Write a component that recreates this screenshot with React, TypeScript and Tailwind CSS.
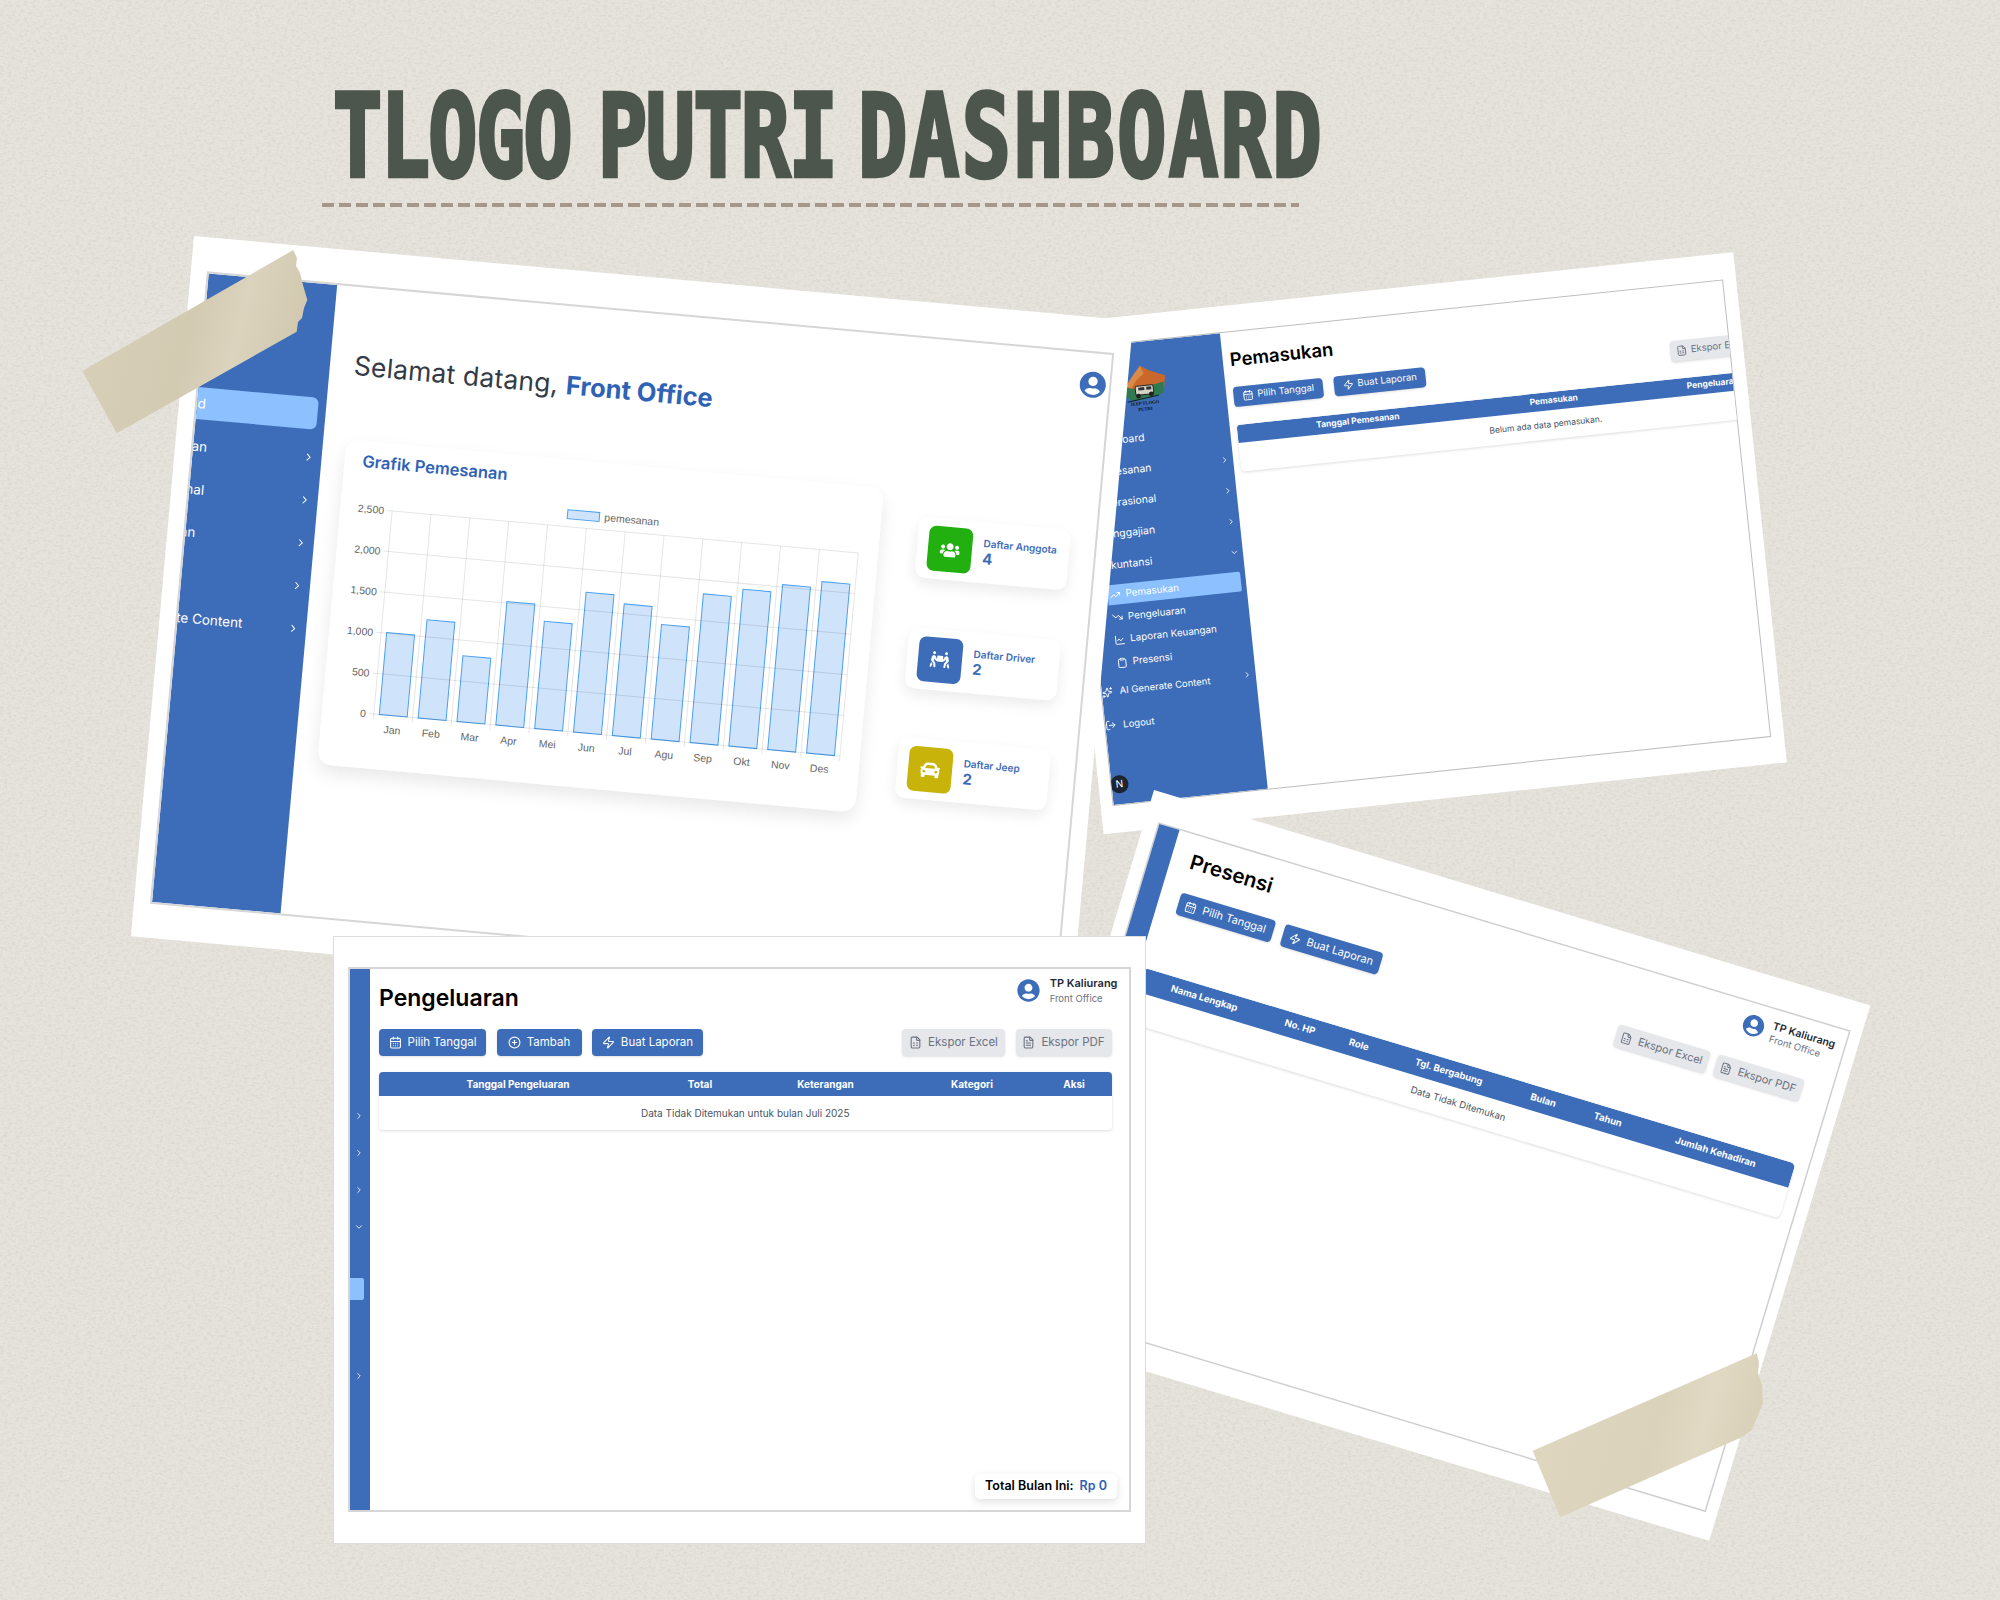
import React from "react";
import {
  CalendarDays, Zap, CirclePlus, FileSpreadsheet, FileText, ChevronRight, ChevronDown,
  TrendingUp, TrendingDown, ChartLine, Clipboard, Sparkles, LogOut, LayoutDashboard,
  CalendarCheck, Truck, Wallet, Calculator,
} from "lucide-react";
import { FaUserCircle, FaUsers, FaPeopleCarry, FaCar } from "react-icons/fa";

const months = ["Jan", "Feb", "Mar", "Apr", "Mei", "Jun", "Jul", "Agu", "Sep", "Okt", "Nov", "Des"];
const values = [1010, 1210, 810, 1520, 1320, 1720, 1620, 1410, 1830, 1930, 2030, 2110];

function Chart() {
  const x0 = 52, x1 = 520, yT = 26, yB = 230;
  const step = (x1 - x0) / 12;
  const y = (v: number) => yB - (v / 2500) * (yB - yT);
  return (
    <svg width="540" height="284" className="block">
      {[0, 500, 1000, 1500, 2000, 2500].map((v) => (
        <g key={v}>
          <text x={x0 - 8} y={y(v) + 4} textAnchor="end" fontSize="10.5" fill="#666" fontFamily="Liberation Sans">
            {v.toLocaleString("en-US")}
          </text>
        </g>
      ))}
      {values.map((v, i) => (
        <rect key={i} x={x0 + i * step + 5.5} y={y(v)} width={step - 11} height={yB - y(v)} fill="#cfe3fb" stroke="#4a9ff0" strokeWidth="1" />
      ))}
      {[0, 500, 1000, 1500, 2000, 2500].map((v) => (
        <line key={v} x1={x0 - 5} x2={x1} y1={y(v)} y2={y(v)} stroke="#000" strokeOpacity="0.1" />
      ))}
      {months.map((m, i) => (
        <line key={m} x1={x0 + i * step} x2={x0 + i * step} y1={yT} y2={yB + 5} stroke="#000" strokeOpacity="0.1" />
      ))}
      <line x1={x1} x2={x1} y1={yT} y2={yB + 5} stroke="#000" strokeOpacity="0.1" />
      {months.map((m, i) => (
        <text key={m} x={x0 + (i + 0.5) * step} y={yB + 18} textAnchor="middle" fontSize="10.5" fill="#666" fontFamily="Liberation Sans">
          {m}
        </text>
      ))}
      <rect x="227" y="9" width="32" height="9" fill="#cfe3fb" stroke="#4a9ff0" />
      <text x="264" y="17" fontSize="10.5" fill="#666" fontFamily="Liberation Sans">pemesanan</text>
    </svg>
  );
}

function Logo() {
  return (
    <svg width="44" height="48" viewBox="0 0 44 48" className="block">
      <polygon points="3,21 10,12 19,2 27,7 36,11 43,14 41,26 3,27" fill="#c9682a" />
      <polygon points="3,21 10,12 19,2 22,10 14,16 8,24" fill="#d98a48" />
      <polygon points="2,32 3,22 12,25 30,22 41,20 40,31 30,34 10,37" fill="#2f7a4e" />
      <rect x="12" y="22" width="18" height="9" rx="1.5" fill="#d4d3c8" stroke="#222" strokeWidth="1" />
      <rect x="15" y="23.5" width="6" height="3" fill="#333" />
      <rect x="23" y="23.5" width="5" height="3" fill="#333" />
      <circle cx="14.5" cy="32" r="2.4" fill="#222" />
      <circle cx="27.5" cy="31" r="2.4" fill="#222" />
      <line x1="3" y1="37" x2="35" y2="33" stroke="#17202b" strokeWidth="1" />
      <text x="20" y="41" textAnchor="middle" fontSize="4.6" fontWeight="700" fill="#111" fontFamily="Liberation Serif">JEEP TLOGO</text>
      <text x="20" y="47" textAnchor="middle" fontSize="4.6" fontWeight="700" fill="#111" fontFamily="Liberation Serif">PUTRI</text>
    </svg>
  );
}

function StatCard({ icon, bg, label, value }: { icon: React.ReactNode; bg: string; label: string; value: string }) {
  return (
    <div className="flex h-[61px] w-[152px] items-center rounded-[10px] bg-white pl-[11px] shadow-[0_6px_14px_rgba(0,0,0,0.08)]">
      <div className={`flex h-[45px] w-[44px] items-center justify-center rounded-[7px] text-white ${bg}`}>{icon}</div>
      <div className="ml-[11px] text-[#3d6cb9]">
        <div className="text-[10px] font-semibold leading-[12px] whitespace-nowrap">{label}</div>
        <div className="mt-[1px] text-[15px] font-bold leading-[18px]">{value}</div>
      </div>
    </div>
  );
}

const sidebar1 = [
  { t: "Pemesanan", w: "w-[14px]" },
  { t: "Operasional", w: "w-[15px]" },
  { t: "Penggajian", w: "w-[10px]" },
  { t: "Akuntansi", w: "w-[0px]" },
  { t: "AI Generate Content", w: "w-[65px]" },
];

function PhotoDashboard() {
  return (
    <div className="absolute left-[193.5px] top-[235.5px] h-[703px] w-[943px] origin-top-left rotate-[5.15deg] bg-white px-[18px] py-[36px]">
      <div className="flex h-[631px] w-[907px] overflow-hidden bg-white ring-2 ring-[#d6d6d6]">
        <div className="h-full w-[129px] shrink-0 overflow-hidden bg-[#3d6cb9] pt-[114px] text-[13.5px] text-white">
          <div className="flex h-[32px] w-[121px] items-center justify-end overflow-hidden rounded-r-md bg-[#8cc0ff]">
            <div className="mr-[112px] flex justify-end whitespace-nowrap">Dashboard</div>
          </div>
          <div className="h-[6px]" />
          {sidebar1.map((r) => (
            <div key={r.t} className="relative flex h-[43px] items-center">
              <div className={`flex justify-end whitespace-nowrap ${r.w}`}>{r.t}</div>
              <ChevronRight className="absolute left-[110px]" size={12} />
            </div>
          ))}
        </div>
        <div className="min-w-0 flex-1">
          <div className="flex h-[153px] justify-between">
            <div className="pl-[24px] pt-[60px] text-[26.5px] leading-[36px] tracking-[0.2px] text-[#333b47]">
              Selamat datang, <span className="text-[25.5px] font-bold tracking-normal text-[#2f62b5]">Front Office</span>
            </div>
            <FaUserCircle className="mr-[3px] mt-[18px] text-[#3d6cb9]" size={27} />
          </div>
          <div className="flex">
            <div className="ml-[23px] h-[326px] w-[540px] rounded-[14px] bg-white shadow-[0_8px_18px_rgba(0,0,0,0.09)]">
              <div className="h-[41px] pl-[18px] pt-[9px] text-[16.5px] font-semibold leading-[22px] text-[#2f62b5]">Grafik Pemesanan</div>
              <Chart />
            </div>
            <div className="ml-[38px] flex flex-col gap-[49.5px] pt-[25px]">
              <StatCard bg="bg-[#22b011]" label="Daftar Anggota" value="4" icon={<FaUsers size={20} />} />
              <StatCard bg="bg-[#3d6cb9]" label="Daftar Driver" value="2" icon={<FaPeopleCarry size={20} />} />
              <StatCard bg="bg-[#c7b30a]" label="Daftar Jeep" value="2" icon={<FaCar size={20} />} />
            </div>
          </div>
        </div>
      </div>
    </div>
  );
}

const side2 = [
  { t: "Dashboard", I: LayoutDashboard, c: false },
  { t: "Pemesanan", I: CalendarCheck, c: true },
  { t: "Operasional", I: Truck, c: true },
  { t: "Penggajian", I: Wallet, c: true },
  { t: "Akuntansi", I: Calculator, c: "down" as const },
];
const sub2 = [
  { t: "Pemasukan", I: TrendingUp },
  { t: "Pengeluaran", I: TrendingDown },
  { t: "Laporan Keuangan", I: ChartLine },
  { t: "Presensi", I: Clipboard },
];

function Btn({ icon, label, cls }: { icon: React.ReactNode; label: string; cls: string }) {
  return (
    <div className={`flex shrink-0 items-center justify-center whitespace-nowrap rounded-[4px] shadow-sm ${cls}`}>
      {icon}
      <span>{label}</span>
    </div>
  );
}

function PhotoPemasukan() {
  return (
    <div className="absolute left-[1050px] top-[324px] h-[513px] w-[687px] origin-top-left rotate-[-6deg] bg-white pl-[13px] pt-[26.5px]">
      <div className="relative flex h-[458px] w-[660px] overflow-hidden bg-white ring-1 ring-[#bdbdbd]">
        <div className="h-full w-[155px] shrink-0 bg-[#3d6cb9] text-[10.5px] text-white">
          <div className="h-[80.5px] pl-[53px] pt-[22px]"><Logo /></div>
          {side2.map((r) => (
            <div key={r.t} className="relative flex h-[31px] items-center pl-[15px]">
              <r.I className="absolute left-[0px]" size={10} />
              <span>{r.t}</span>
              {r.c === "down" ? (
                <ChevronDown className="absolute left-[142px] top-[11px]" size={9} />
              ) : r.c ? (
                <ChevronRight className="absolute left-[142px] top-[11px]" size={9} />
              ) : null}
            </div>
          ))}
          <div className="h-[3px]" />
          {sub2.map((r, i) => (
            <div key={r.t} className="relative flex h-[22.6px] items-center pl-[34px] text-[9.8px]">
              {i === 0 && <div className="absolute left-[16px] top-[1px] h-[20px] w-[134px] rounded-r-[2px] bg-[#8cc0ff]" />}
              <r.I className="absolute left-[18px]" size={11} />
              <span className="relative">{r.t}</span>
            </div>
          ))}
          <div className="relative mt-[1.5px] flex h-[31px] items-center pl-[18px] text-[9.5px]">
            <Sparkles className="absolute left-[0px]" size={11} />
            <span>AI Generate Content</span>
            <ChevronRight className="absolute left-[142px] top-[8px]" size={9} />
          </div>
          <div className="relative mt-[2.5px] flex h-[31px] items-center pl-[18px] text-[9.5px]">
            <LogOut className="absolute left-[0px]" size={11} />
            <span>Logout</span>
          </div>
        </div>
        <div className="w-[615px] shrink-0 pl-[7px]">
          <div className="pt-[14px] text-[18.5px] font-semibold leading-[26px] text-black">Pemasukan</div>
          <div className="mt-[15px] flex text-[9.5px] text-white">
            <Btn cls="h-[20px] w-[90px] gap-[4px] bg-[#3d6cb9]" icon={<CalendarDays size={11} />} label="Pilih Tanggal" />
            <Btn cls="ml-[11px] h-[20px] w-[92px] gap-[4px] bg-[#3d6cb9]" icon={<Zap size={11} />} label="Buat Laporan" />
            <Btn cls="ml-[246px] h-[21px] w-[84px] gap-[4px] bg-[#e5e7eb] text-[#6b7280]" icon={<FileSpreadsheet size={11} />} label="Ekspor Excel" />
          </div>
          <div className="mt-[17px] w-[615px] overflow-hidden rounded-[4px] bg-white shadow-[0_1px_3px_rgba(0,0,0,0.14)]">
            <div className="grid h-[18px] grid-cols-[242px_152px_168px_53px] items-center bg-[#3d6cb9] text-center text-[8.5px] font-bold text-white">
              <div>Tanggal Pemesanan</div>
              <div>Pemasukan</div>
              <div>Pengeluaran</div>
              <div>Saldo</div>
            </div>
            <div className="flex h-[29px] items-start justify-center pt-[8px] text-[8.5px] leading-[12px] text-[#4b5563]">Belum ada data pemasukan.</div>
          </div>
        </div>
        <div className="absolute bottom-[11px] left-[-1px] flex h-[18px] w-[18px] items-center justify-center rounded-full bg-[#1b2433] text-[10px] font-normal text-white">N</div>
      </div>
    </div>
  );
}

function PhotoPresensi() {
  const cols = ["Nama Lengkap", "No. HP", "Role", "Tgl. Bergabung", "Bulan", "Tahun", "Jumlah Kehadiran"];
  return (
    <div className="absolute left-[1153.6px] top-[790px] h-[559px] w-[748px] origin-top-left rotate-[16.75deg] bg-white pl-[14.6px] pt-[31px]">
      <div className="flex h-[500px] w-[720px] bg-white ring-[1.5px] ring-[#cfcfcf]">
        <div className="h-full w-[21px] shrink-0 bg-[#3d6cb9]" />
        <div className="min-w-0 flex-1 pl-[20px] pr-[13px]">
          <div className="flex h-[40px] justify-between">
            <div className="pt-[14px] text-[20.5px] font-semibold leading-[26px] text-black">Presensi</div>
            <div className="-mr-[4px] flex items-start pt-[10px]">
              <FaUserCircle className="mr-[8px] mt-[1px] text-[#3d6cb9]" size={22} />
              <div>
                <div className="text-[10.5px] font-semibold leading-[13px] text-[#1f2937]">TP Kaliurang</div>
                <div className="mt-[1px] text-[9.5px] leading-[12px] text-[#6b7280]">Front Office</div>
              </div>
            </div>
          </div>
          <div className="mt-[19px] flex justify-between pr-[15px] text-[11px]">
            <div className="flex gap-[10px] text-white">
              <Btn cls="h-[23px] w-[99px] gap-[6px] bg-[#3d6cb9]" icon={<CalendarDays size={12} />} label="Pilih Tanggal" />
              <Btn cls="h-[23px] w-[102px] gap-[6px] bg-[#3d6cb9]" icon={<Zap size={12} />} label="Buat Laporan" />
            </div>
            <div className="flex gap-[8px] text-[#6b7280]">
              <Btn cls="h-[23px] w-[96px] gap-[6px] bg-[#e5e7eb]" icon={<FileSpreadsheet size={12} />} label="Ekspor Excel" />
              <Btn cls="h-[23px] w-[90px] gap-[6px] bg-[#e5e7eb]" icon={<FileText size={12} />} label="Ekspor PDF" />
            </div>
          </div>
          <div className="-ml-[14px] mt-[60px] overflow-hidden rounded-[5px] bg-white shadow-[0_1px_3px_rgba(0,0,0,0.14)]">
            <div className="grid h-[25px] grid-cols-[105px_95px_28px_160px_37px_98px_127px_16px] items-center bg-[#3d6cb9] pl-[14px] text-[9.5px] font-bold text-white">
              {cols.map((c) => (
                <div key={c} className="flex justify-center whitespace-nowrap">{c}</div>
              ))}
            </div>
            <div className="flex h-[32px] items-start justify-center pt-[9px] text-[9.5px] leading-[12px] text-[#4b5563]">Data Tidak Ditemukan</div>
          </div>
        </div>
      </div>
    </div>
  );
}

function PhotoPengeluaran() {
  const cols = ["Tanggal Pengeluaran", "Total", "Keterangan", "Kategori", "Aksi"];
  return (
    <div className="absolute left-[333.5px] top-[936.5px] h-[606.5px] w-[811.5px] bg-white pl-[16px] pt-[32.5px] ring-1 ring-[#dcdcdc]">
      <div className="relative flex h-[541px] w-[779.5px] bg-white ring-2 ring-[#d6d6d6]">
        <div className="h-full w-[20px] shrink-0 bg-[#3d6cb9] pt-[128.5px] text-white">
          {[0, 1, 2, 3].map((i) => (
            <div key={i} className="flex h-[37px] items-center pl-[4px]">
              {i === 3 ? <ChevronDown size={10} /> : <ChevronRight size={10} />}
            </div>
          ))}
          <div className="mt-[32.5px] h-[22px] w-[14.5px] rounded-r-[2px] bg-[#8cc0ff]" />
          <div className="mt-[66px] flex h-[20px] items-center pl-[4px]"><ChevronRight size={10} /></div>
        </div>
        <div className="min-w-0 flex-1 pl-[9.5px] pr-[17.5px]">
          <div className="flex h-[60px] justify-between">
            <div className="pt-[14px] text-[23px] font-semibold leading-[30px] text-black">Pengeluaran</div>
            <div className="-mr-[6px] flex items-start pt-[7px]">
              <FaUserCircle className="mr-[10px] mt-[3px] text-[#3d6cb9]" size={23} />
              <div>
                <div className="text-[11px] font-semibold leading-[15px] text-[#1f2937]">TP Kaliurang</div>
                <div className="text-[9.5px] leading-[15px] text-[#6b7280]">Front Office</div>
              </div>
            </div>
          </div>
          <div className="flex justify-between text-[11.5px]">
            <div className="flex gap-[10.5px] text-white">
              <Btn cls="h-[27px] w-[107px] gap-[6px] bg-[#3d6cb9]" icon={<CalendarDays size={13} />} label="Pilih Tanggal" />
              <Btn cls="h-[27px] w-[85px] gap-[6px] bg-[#3d6cb9]" icon={<CirclePlus size={13} />} label="Tambah" />
              <Btn cls="h-[27px] w-[111px] gap-[6px] bg-[#3d6cb9]" icon={<Zap size={13} />} label="Buat Laporan" />
            </div>
            <div className="flex gap-[10.5px] text-[#6b7280]">
              <Btn cls="h-[27px] w-[103px] gap-[6px] bg-[#e5e7eb]" icon={<FileSpreadsheet size={13} />} label="Ekspor Excel" />
              <Btn cls="h-[27px] w-[96px] gap-[6px] bg-[#e5e7eb]" icon={<FileText size={13} />} label="Ekspor PDF" />
            </div>
          </div>
          <div className="mt-[16px] overflow-hidden rounded-[4px] bg-white shadow-[0_1px_3px_rgba(0,0,0,0.14)]">
            <div className="grid h-[24px] grid-cols-[278px_86px_165px_128px_76px] items-center bg-[#3d6cb9] text-center text-[10px] font-bold text-white">
              {cols.map((c) => (
                <div key={c}>{c}</div>
              ))}
            </div>
            <div className="flex h-[34px] items-center justify-center text-[10px] text-[#4b5563]">Data Tidak Ditemukan untuk bulan Juli 2025</div>
          </div>
        </div>
        <div className="absolute bottom-[11px] right-[12px] flex h-[25px] w-[142px] items-center justify-center gap-[6px] rounded-[5px] bg-white text-[12.5px] font-semibold text-black shadow-[0_3px_8px_rgba(0,0,0,0.12)]">
          <span>Total Bulan Ini:</span>
          <span className="text-[#2f62b5]">Rp 0</span>
        </div>
      </div>
    </div>
  );
}

export default function App() {
  return (
    <div className="relative h-[1600px] w-[2000px] overflow-hidden bg-[#e4e1da] [font-family:Inter,sans-serif]">
      <svg className="absolute inset-0 h-full w-full" aria-hidden="true">
        <filter id="paper" x="0" y="0" width="100%" height="100%">
          <feTurbulence type="fractalNoise" baseFrequency="0.25 0.4" numOctaves="4" seed="11" />
          <feColorMatrix values="0 0 0 0 0.5  0 0 0 0 0.47  0 0 0 0 0.41  0 0 0 0.6 -0.26" />
        </filter>
        <filter id="spots" x="0" y="0" width="100%" height="100%">
          <feTurbulence type="fractalNoise" baseFrequency="0.9" numOctaves="2" seed="4" />
          <feColorMatrix values="0 0 0 0 1  0 0 0 0 1  0 0 0 0 0.98  0 0 0 0.5 -0.2" />
        </filter>
        <rect width="2000" height="1600" filter="url(#paper)" />
        <rect width="2000" height="1600" filter="url(#spots)" />
      </svg>

      <div className="relative pl-[333px] pt-[79px]">
        <div className="h-[115px] w-[1000px] origin-left scale-x-[0.715] whitespace-nowrap text-[114px] font-bold leading-[115px] text-[#4d564d] [font-family:'DejaVu_Sans_Mono',monospace] [word-spacing:-38px] [-webkit-text-stroke:4.5px_#4d564d]">
          <span className="tracking-[-2px] [word-spacing:-29px]">TLOGO PUTRI</span> <span className="tracking-[3.8px]">DASHBOARD</span>
        </div>
        <div className="-ml-[11px] mt-[9px] h-[4px] w-[977px] bg-[repeating-linear-gradient(90deg,#a59789_0,#a59789_12px,transparent_12px,transparent_17px)]" />
      </div>

      <PhotoPemasukan />
      <PhotoDashboard />
      <PhotoPresensi />
      <PhotoPengeluaran />

      <svg className="pointer-events-none absolute inset-0 h-full w-full" aria-hidden="true">
        <defs>
          <linearGradient id="tapeA" x1="0" y1="0" x2="1" y2="0.2">
            <stop offset="0" stopColor="#d9d0b9" />
            <stop offset="0.55" stopColor="#d3cab2" />
            <stop offset="0.75" stopColor="#dbd3bd" />
            <stop offset="1" stopColor="#d2c9b0" />
          </linearGradient>
          <linearGradient id="tapeB" x1="0" y1="0" x2="1" y2="0.2">
            <stop offset="0" stopColor="#dfd7c1" />
            <stop offset="0.6" stopColor="#dbd2ba" />
            <stop offset="0.8" stopColor="#e1d9c4" />
            <stop offset="1" stopColor="#d9d0b8" />
          </linearGradient>
        </defs>
        <polygon points="82.3,371 293.3,250 297,258 296,266 300,273 303,285 307.3,300 304,308 302,318 298,322 296.7,331.7 116.7,433.3" fill="url(#tapeA)" />
        <polygon points="1532.7,1450.7 1756.7,1353.3 1759,1362 1758,1373 1762,1385 1763,1403 1757,1418 1751.7,1430 1740,1438 1560,1517.3" fill="url(#tapeB)" />
      </svg>
    </div>
  );
}
